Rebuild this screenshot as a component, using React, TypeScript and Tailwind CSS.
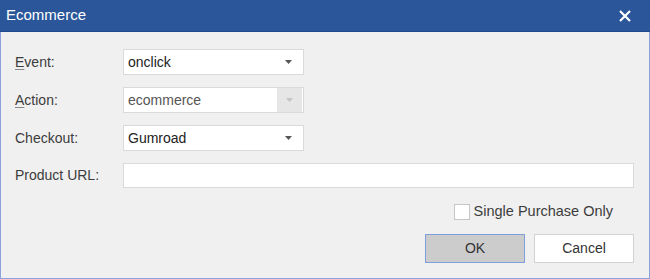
import { useState } from "react";

const FONT = { fontFamily: '"Liberation Sans", Arial, sans-serif' };

function Arrow({ muted }: { muted?: boolean }) {
  return (
    <svg width="7" height="4" viewBox="0 0 7 4" className="shrink-0">
      <path d="M0 0 H7 L3.5 4 Z" fill={muted ? "#c4c4c4" : "#555555"} />
    </svg>
  );
}

function Select({ value, disabled }: { value: string; disabled?: boolean }) {
  return (
    <div className="flex h-[26px] w-[181px] items-center border border-[#dadada] bg-white">
      <span className={`flex-1 pl-[4px] text-[14px] ${disabled ? "text-[#555]" : "text-[#222]"}`}>
        {value}
      </span>
      {disabled ? (
        <div className="mr-px flex h-[24px] w-[25px] items-center justify-center bg-[#e6e6e6]">
          <Arrow muted />
        </div>
      ) : (
        <div className="flex w-[26px] items-center justify-center pr-[4px]">
          <Arrow />
        </div>
      )}
    </div>
  );
}

function Row({ label, children }: { label: React.ReactNode; children: React.ReactNode }) {
  return (
    <div className="flex h-[26px] items-center">
      <div className="w-[108px] text-[14px] text-[#3c3c3c]">{label}</div>
      {children}
    </div>
  );
}

export default function App() {
  const [single, setSingle] = useState(false);
  const [url, setUrl] = useState("");

  return (
    <div className="flex h-[279px] w-[650px] flex-col overflow-hidden" style={FONT}>
      <div className="flex h-[32px] shrink-0 items-center justify-between border-b border-[#1f4a8c] bg-[#2b579a] pl-[6px] pr-[19px]">
        <span className="text-[15px] text-white">Ecommerce</span>
        <svg width="12" height="12" viewBox="0 0 12 12">
          <path d="M1 1 L11 11 M11 1 L1 11" stroke="white" strokeWidth="2.2" />
        </svg>
      </div>
      <div className="flex flex-1 flex-col border-x border-b border-[#8ba2dc] bg-[#f0f0f0] pl-[14px] pr-[15px] pt-[17px]">
        <div className="flex flex-col gap-[12px]">
          <Row
            label={
              <>
                <span className="underline decoration-[#888] underline-offset-2">E</span>vent:
              </>
            }
          >
            <Select value="onclick" />
          </Row>
          <Row
            label={
              <>
                <span className="underline decoration-[#888] underline-offset-2">A</span>ction:
              </>
            }
          >
            <Select value="ecommerce" disabled />
          </Row>
          <Row label="Checkout:">
            <Select value="Gumroad" />
          </Row>
          <div className="flex h-[25px] items-center">
            <div className="w-[108px] text-[14px] text-[#3c3c3c]">Product URL:</div>
            <input
              value={url}
              onChange={(e) => setUrl(e.target.value)}
              className="h-[25px] flex-1 border border-[#dadada] bg-white px-1 text-[14px] outline-none"
            />
          </div>
        </div>
        <label className="mt-[16px] flex h-[16px] cursor-pointer items-center justify-end pr-[21px]">
          <input
            type="checkbox"
            checked={single}
            onChange={(e) => setSingle(e.target.checked)}
            className="sr-only"
          />
          <span className="h-[16px] w-[16px] border border-[#c6c6c6] bg-white" />
          <span className="ml-[4px] text-[14.5px] text-[#3c3c3c]">Single Purchase Only</span>
        </label>
        <div className="mt-[14px] flex justify-end gap-[9px]">
          <button className="h-[29px] w-[100px] border border-[#7e9fd9] bg-[#cccccc] text-[14px] text-[#333]">
            OK
          </button>
          <button className="h-[29px] w-[100px] border border-[#d2d2d2] bg-white text-[14px] text-[#333]">
            Cancel
          </button>
        </div>
      </div>
    </div>
  );
}
